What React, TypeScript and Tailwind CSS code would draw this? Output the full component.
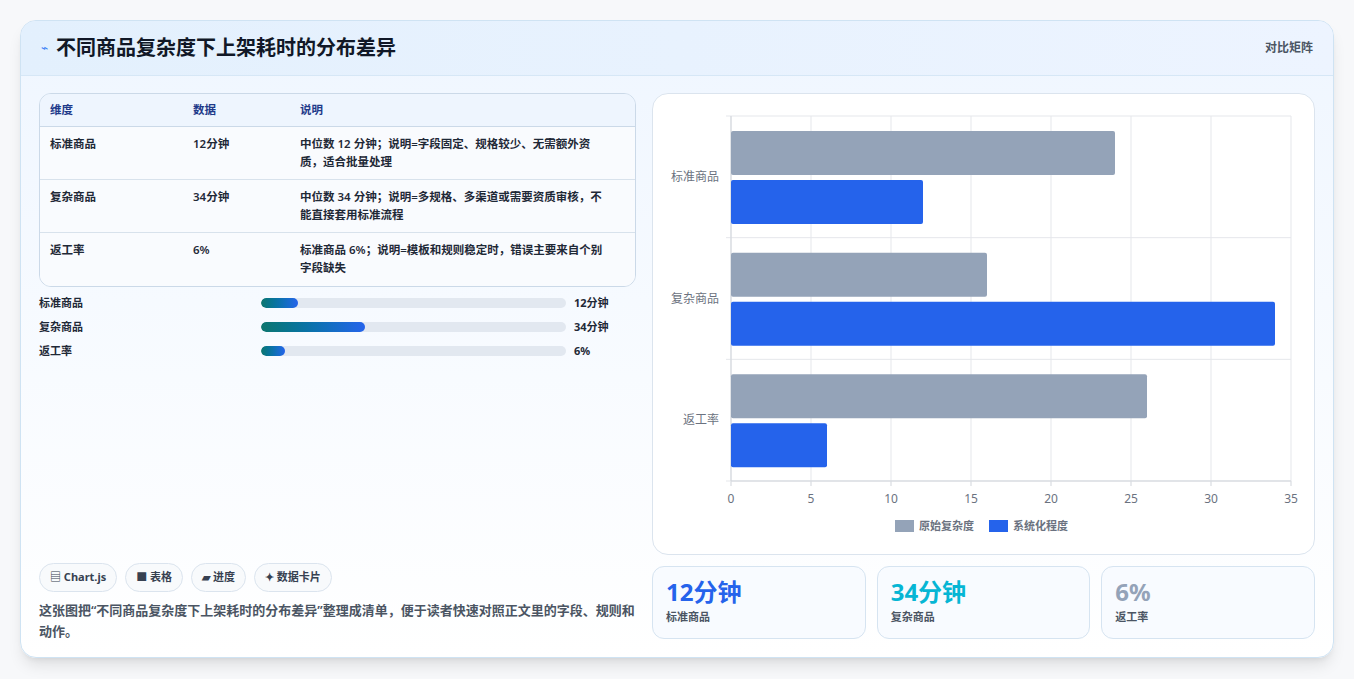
import React from "react";

const rows = [
  ["标准商品", "12分钟", "中位数 12 分钟；说明=字段固定、规格较少、无需额外资质，适合批量处理"],
  ["复杂商品", "34分钟", "中位数 34 分钟；说明=多规格、多渠道或需要资质审核，不能直接套用标准流程"],
  ["返工率", "6%", "标准商品 6%；说明=模板和规则稳定时，错误主要来自个别字段缺失"],
];
const prog = [["标准商品", 12, "12分钟"], ["复杂商品", 34, "34分钟"], ["返工率", 8, "6%"]] as const;

function Chart() {
  const ox = 78, oy = 22, w = 560, h = 365;
  const sx = (v: number) => ox + (v / 35) * w;
  const data = [["标准商品", 24, 12], ["复杂商品", 16, 34], ["返工率", 26, 6]] as const;
  const band = h / 3;
  return (
    <svg width="661" height="461" className="block">
      {[0, 5, 10, 15, 20, 25, 30, 35].map((t) => (
        <g key={t}>
          <line x1={sx(t)} x2={sx(t)} y1={oy} y2={oy + h} stroke="#e5e7eb" />
          <line x1={sx(t)} x2={sx(t)} y1={oy + h} y2={oy + h + 5} stroke="#d1d5db" />
          <text x={sx(t)} y={oy + h + 22} textAnchor="middle" fontSize="12" fill="#6b7280">{t}</text>
        </g>
      ))}
      {[0, 1, 2, 3].map((i) => (
        <line key={i} x1={ox - 5} x2={ox + w} y1={oy + i * band} y2={oy + i * band} stroke="#e5e7eb" />
      ))}
      <line x1={ox} x2={ox + w} y1={oy + h} y2={oy + h} stroke="#d1d5db" />
      <line x1={ox} x2={ox} y1={oy} y2={oy + h} stroke="#d1d5db" />
      {data.map(([l, a, b], i) => {
        const y0 = oy + i * band;
        return (
          <g key={l}>
            <text x={ox - 12} y={y0 + band / 2 + 4} textAnchor="end" fontSize="12" fill="#6b7280">{l}</text>
            <rect x={ox} y={y0 + 15} width={sx(a) - ox} height={44} fill="#94a3b8" rx="2" />
            <rect x={ox} y={y0 + 64} width={sx(b) - ox} height={44} fill="#2563eb" rx="2" />
          </g>
        );
      })}
      <rect x={242} y={426} width={19} height={12} fill="#94a3b8" />
      <text x={266} y={436} fontSize="11" fontWeight="700" fill="#6b7280">原始复杂度</text>
      <rect x={336} y={426} width={19} height={12} fill="#2563eb" />
      <text x={360} y={436} fontSize="11" fontWeight="700" fill="#6b7280">系统化程度</text>
    </svg>
  );
}

export default function App() {
  return (
    <div className="w-[1354px] h-[679px] bg-[#f7f8fa] pt-5 px-5" style={{ fontFamily: '"Noto Sans","Noto Sans CJK SC",sans-serif' }}>
      <div className="bg-gradient-to-b from-[#eff6ff] to-white border border-[#cfe3f3] rounded-2xl h-[638px] shadow-lg overflow-hidden">
        <div className="h-[55px] bg-gradient-to-r from-[#e3f0fd] to-[#edf4ff] border-b border-[#d6e7f6] flex items-center justify-between px-5">
          <div className="flex items-center gap-2">
            <span className="text-[#3b82f6] text-xs">⌁</span>
            <span className="text-[20px] font-bold text-[#111827]">不同商品复杂度下上架耗时的分布差异</span>
          </div>
          <span className="text-xs font-bold text-[#4b5563]">对比矩阵</span>
        </div>
        <div className="flex gap-4 px-[18px] pt-[17px]">
          <div className="w-[598px] flex flex-col h-[566px]">
            <div className="border border-[#cbd9e8] rounded-xl overflow-hidden text-[11.5px] font-semibold text-[#1f2937]">
              <div className="grid grid-cols-[143px_107px_1fr] bg-[#eef5fe] h-[33px] items-center px-[10px] text-[#1e3a8a] font-bold border-b border-[#cbd9e8]">
                <span>维度</span><span>数据</span><span>说明</span>
              </div>
              {rows.map((r, i) => (
                <div key={i} className={`grid grid-cols-[143px_107px_1fr] px-[10px] pt-[8px] h-[53px] bg-[#f9fbfe] leading-[18px] ${i < 2 ? "border-b border-[#d8e2ec]" : ""}`}>
                  <span>{r[0]}</span><span>{r[1]}</span><span className="pr-[14px]">{r[2]}</span>
                </div>
              ))}
            </div>
            <div className="mt-[7px] flex flex-col gap-[6px]">
              {prog.map(([l, v, t]) => (
                <div key={l} className="flex items-center h-[18px] text-[11px] font-semibold text-[#1f2937]">
                  <span className="w-[222px]">{l}</span>
                  <div className="w-[305px] h-[10px] bg-[#e2e8f0] rounded-full overflow-hidden">
                    <div className="h-full rounded-full bg-gradient-to-r from-[#0f766e] to-[#2563eb]" style={{ width: `${v}%` }} />
                  </div>
                  <span className="ml-2 font-bold">{t}</span>
                </div>
              ))}
            </div>
            <div className="mt-auto mb-[17px]">
              <div className="flex gap-2 text-[11px] font-bold text-[#374151]">
                {["▤ Chart.js", "■ 表格", "▰ 进度", "✦ 数据卡片"].map((c) => (
                  <span key={c} className="h-[29px] px-[10px] flex items-center border border-[#dbe4ee] rounded-full bg-[#f8fafc]">{c}</span>
                ))}
              </div>
              <p className="mt-[8px] text-[13px] font-semibold text-[#4b5563] leading-[21px]">这张图把“不同商品复杂度下上架耗时的分布差异”整理成清单，便于读者快速对照正文里的字段、规则和动作。</p>
            </div>
          </div>
          <div className="flex-1 flex flex-col gap-[11px]">
            <div className="h-[462px] border border-[#dbe4ee] rounded-2xl bg-white overflow-hidden">
              <Chart />
            </div>
            <div className="grid grid-cols-3 gap-[11px]">
              {[["12分钟", "标准商品", "text-[#2563eb]"], ["34分钟", "复杂商品", "text-[#06b6d4]"], ["6%", "返工率", "text-[#94a3b8]"]].map(([v, l, c]) => (
                <div key={l} className="h-[73px] border border-[#d6e4f1] rounded-xl bg-[#f8fbff] px-[13px] pt-[8px]">
                  <div className={`text-[24px] font-bold leading-[34px] ${c}`}>{v}</div>
                  <div className="text-[11px] font-semibold text-[#4b5563]">{l}</div>
                </div>
              ))}
            </div>
          </div>
        </div>
      </div>
    </div>
  );
}
